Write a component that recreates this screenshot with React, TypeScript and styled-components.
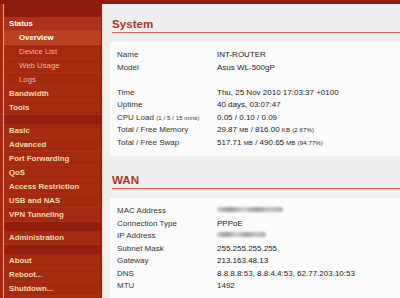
import React from 'react';
import styled, { createGlobalStyle } from 'styled-components';

const GlobalStyle = createGlobalStyle`
  html, body {
    margin: 0;
    padding: 0;
    background: #eeeeee;
  }
  body {
    font-family: "Liberation Sans", Arial, sans-serif;
    overflow: hidden;
  }
`;

type NavItem = { label: string; kind: 'main' | 'sub' | 'sep'; active?: boolean; current?: boolean };

const NAV: NavItem[] = [
  { label: 'Status', kind: 'main', active: true },
  { label: 'Overview', kind: 'sub', current: true },
  { label: 'Device List', kind: 'sub' },
  { label: 'Web Usage', kind: 'sub' },
  { label: 'Logs', kind: 'sub' },
  { label: 'Bandwidth', kind: 'main' },
  { label: 'Tools', kind: 'main' },
  { label: '', kind: 'sep' },
  { label: 'Basic', kind: 'main' },
  { label: 'Advanced', kind: 'main' },
  { label: 'Port Forwarding', kind: 'main' },
  { label: 'QoS', kind: 'main' },
  { label: 'Access Restriction', kind: 'main' },
  { label: 'USB and NAS', kind: 'main' },
  { label: 'VPN Tunneling', kind: 'main' },
  { label: '', kind: 'sep' },
  { label: 'Administration', kind: 'main' },
  { label: '', kind: 'sep' },
  { label: 'About', kind: 'main' },
  { label: 'Reboot...', kind: 'main' },
  { label: 'Shutdown...', kind: 'main' },
];

const Page = styled.div`
  width: 400px;
  height: 298px;
  display: flex;
  flex-direction: column;
  overflow: hidden;
`;

const TopBar = styled.div`
  height: 4px;
  flex: none;
  background: #8c1c0c;
  border-bottom: 0;
`;

const Main = styled.div`
  flex: 1;
  display: flex;
  min-height: 0;
`;

const Sidebar = styled.nav`
  width: 102px;
  flex: none;
  background: #a3290f;
  padding-left: 3px;
  box-sizing: border-box;
  border-right: 1px solid #8e1f0c;
`;

const NavInner = styled.div`
  height: 100%;
  border-left: 1px solid #e7b7a4;
  display: flex;
  flex-direction: column;
`;

const NavHead = styled.div`
  height: 13px;
  flex: none;
  background: #8c1c0c;
`;

const NavRow = styled.div<{ $sub?: boolean; $active?: boolean; $current?: boolean }>`
  height: 14px;
  flex: none;
  box-sizing: border-box;
  padding-left: ${p => (p.$sub ? 15 : 5)}px;
  display: flex;
  align-items: center;
  font-size: 7.8px;
  font-weight: ${p => (p.$sub && !p.$current ? 400 : 700)};
  color: ${p => (p.$active || p.$current ? '#ffffff' : p.$sub ? '#eab9a0' : '#f6dcb0')};
  background: ${p => (p.$current ? '#ba4222' : p.$active ? '#ac3219' : 'transparent')};
  border-bottom: 1px solid rgba(255, 255, 255, 0.05);
  white-space: nowrap;
`;

const NavSep = styled.div`
  height: 9px;
  flex: none;
  background: #921f0d;
`;

const Content = styled.main`
  flex: 1;
  background: #eeeeee;
  overflow: hidden;
`;

const Section = styled.section`
  & + & {
    margin-top: 4px;
  }
`;

const Title = styled.h2`
  margin: 0 0 0 10px;
  padding-top: 12px;
  height: 15px;
  line-height: 15px;
  box-sizing: content-box;
  font-size: 11.6px;
  font-weight: 700;
  color: #a9381b;
`;

const TitleRule = styled.div`
  margin: 1px 0 9px 10px;
  height: 1px;
  background: #c9675a;
  box-shadow: 0 1px 0 #eed8d2;
`;

const Body = styled.div`
  margin-left: 8px;
  background: #fbfbfb;
  padding: 7px 0 7px 7px;
  display: grid;
  grid-template-columns: 100px 1fr;
  grid-auto-rows: 12.5px;
  font-size: 8px;
  line-height: 12.5px;
  color: #2a2a2a;
  white-space: nowrap;
`;

const Label = styled.div`
  color: #333333;
`;

const Value = styled.div`
  color: #222222;
`;

const Small = styled.span`
  font-size: 6px;
  letter-spacing: 0.1px;
`;

const Blur = styled.span<{ $w: number }>`
  display: inline-block;
  vertical-align: middle;
  width: ${p => p.$w}px;
  height: 5px;
  margin-top: -2px;
  border-radius: 3px;
  background: linear-gradient(90deg, #c8c8c8 0%, #9a9a9a 20%, #d0d0d0 40%, #a0a0a0 60%, #c4c4c4 80%, #aaaaaa 100%);
  filter: blur(1.2px);
`;

type Row = [React.ReactNode, React.ReactNode] | null;

const SYSTEM: Row[] = [
  ['Name', 'INT-ROUTER'],
  ['Model', 'Asus WL-500gP'],
  null,
  ['Time', 'Thu, 25 Nov 2010 17:03:37 +0100'],
  ['Uptime', '40 days, 03:07:47'],
  [<>CPU Load <Small>(1 / 5 / 15 mins)</Small></>, '0.05 / 0.10 / 0.09'],
  ['Total / Free Memory', <>29.87 <Small>MB</Small> / 816.00 <Small>KB</Small> <Small>(2.67%)</Small></>],
  ['Total / Free Swap', <>517.71 <Small>MB</Small> / 490.65 <Small>MB</Small> <Small>(94.77%)</Small></>],
];

const WAN: Row[] = [
  ['MAC Address', <Blur $w={66} />],
  ['Connection Type', 'PPPoE'],
  ['IP Address', <Blur $w={49} />],
  ['Subnet Mask', '255.255.255.255'],
  ['Gateway', '213.163.48.13'],
  ['DNS', '8.8.8.8:53, 8.8.4.4:53, 62.77.203.10:53'],
  ['MTU', '1492'],
];

function InfoSection({ title, rows }: { title: string; rows: Row[] }) {
  return (
    <Section>
      <Title>{title}</Title>
      <TitleRule />
      <Body>
        {rows.map((r, i) =>
          r ? (
            <React.Fragment key={i}>
              <Label>{r[0]}</Label>
              <Value>{r[1]}</Value>
            </React.Fragment>
          ) : (
            <React.Fragment key={i}>
              <Label />
              <Value />
            </React.Fragment>
          )
        )}
      </Body>
    </Section>
  );
}

export default function App() {
  return (
    <Page>
      <GlobalStyle />
      <TopBar />
      <Main>
        <Sidebar>
          <NavInner>
            <NavHead />
            {NAV.map((n, i) =>
              n.kind === 'sep' ? (
                <NavSep key={i} />
              ) : (
                <NavRow key={i} $sub={n.kind === 'sub'} $active={n.active} $current={n.current}>
                  {n.label}
                </NavRow>
              )
            )}
          </NavInner>
        </Sidebar>
        <Content>
          <InfoSection title="System" rows={SYSTEM} />
          <InfoSection title="WAN" rows={WAN} />
        </Content>
      </Main>
    </Page>
  );
}
